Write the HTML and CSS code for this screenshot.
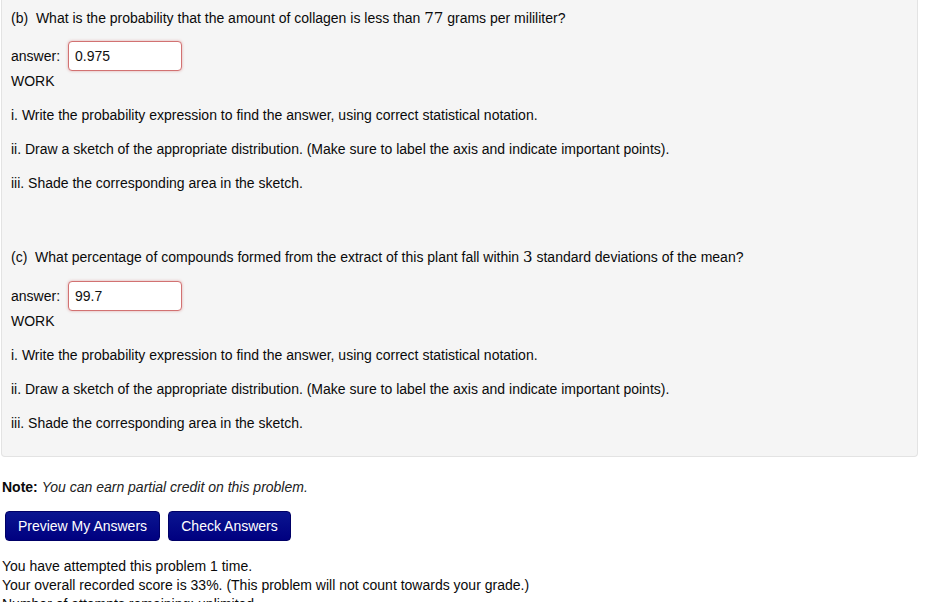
FILE: index.html
```html
<!DOCTYPE html>
<html>
<head>
<meta charset="utf-8">
<link rel="stylesheet" href="styles.css">
</head>
<body>
<div class="panel">
  <p class="q">(b)&nbsp; What is the probability that the amount of collagen is less than <span class="math">77</span> grams per mililiter?</p>
  <div class="ans"><span class="lbl">answer:</span><input class="inp" type="text" value="0.975"></div>
  <div class="work">WORK</div>
  <p class="step">i. Write the probability expression to find the answer, using correct statistical notation.</p>
  <p class="step">ii. Draw a sketch of the appropriate distribution. (Make sure to label the axis and indicate important points).</p>
  <p class="step">iii. Shade the corresponding area in the sketch.</p>

  <p class="q qc">(c)&nbsp; What percentage of compounds formed from the extract of this plant fall within <span class="math">3</span> standard deviations of the mean?</p>
  <div class="ans ans-c"><span class="lbl">answer:</span><input class="inp" type="text" value="99.7"></div>
  <div class="work">WORK</div>
  <p class="step">i. Write the probability expression to find the answer, using correct statistical notation.</p>
  <p class="step">ii. Draw a sketch of the appropriate distribution. (Make sure to label the axis and indicate important points).</p>
  <p class="step">iii. Shade the corresponding area in the sketch.</p>
</div>
<p class="note"><b>Note:</b> <i>You can earn partial credit on this problem.</i></p>
<div class="buttons">
  <button class="btn btn-preview">Preview My Answers</button>
  <button class="btn btn-check">Check Answers</button>
</div>
<div class="status">
  <div>You have attempted this problem 1 time.</div>
  <div>Your overall recorded score is 33%. (This problem will not count towards your grade.)</div>
  <div>Number of attempts remaining: unlimited.</div>
</div>
</body>
</html>
```
FILE: styles.css
```css
html, body {
  margin: 0;
  padding: 0;
  background: #ffffff;
}
body {
  font-family: "Liberation Sans", Arial, sans-serif;
  font-size: 14px;
  line-height: 20px;
  color: #0a0a0a;
  padding-left: 1px;
  width: 917px;
}
.panel {
  background: #f5f5f5;
  border: 1px solid #e3e3e3;
  border-top: none;
  border-radius: 0 0 4px 4px;
  padding: 8px 9px 23px 9px;
}
.panel p {
  margin: 0;
}
.q {
  height: 20px;
}
.panel p.qc {
  margin-top: 54px;
}
.math {
  font-family: "DejaVu Serif", "Liberation Serif", serif;
  font-size: 15px;
}
.ans {
  display: flex;
  align-items: center;
  gap: 8px;
  margin-top: 13px;
  height: 30px;
}
.ans.ans-c {
  margin-top: 14px;
}
.inp {
  box-sizing: border-box;
  width: 114px;
  height: 30px;
  border: 1px solid #d27272;
  border-radius: 4px;
  box-shadow: 0 0 3px rgba(200, 80, 80, 0.45);
  background: #fff;
  font-family: "Liberation Sans", Arial, sans-serif;
  font-size: 14px;
  color: #111;
  padding: 0 6px;
  margin: 0;
  outline: none;
}
.work {
  margin-top: 0;
}
.panel p.step {
  margin-top: 14px;
}
.note {
  margin: 20px 0 0 1px;
}
.note i {
  color: #222;
}
.buttons {
  display: flex;
  gap: 8px;
  margin: 14px 0 0 4px;
}
.btn {
  height: 30px;
  border: 1px solid #000066;
  border-radius: 4px;
  background: linear-gradient(#0a1590, #000080);
  color: #fff;
  font-family: "Liberation Sans", Arial, sans-serif;
  font-size: 14px;
  padding: 0;
  margin: 0;
  white-space: nowrap;
}
.btn-preview {
  width: 155px;
}
.btn-check {
  width: 123px;
}
.status {
  margin-top: 16px;
  line-height: 19px;
  padding-left: 1px;
}
```
